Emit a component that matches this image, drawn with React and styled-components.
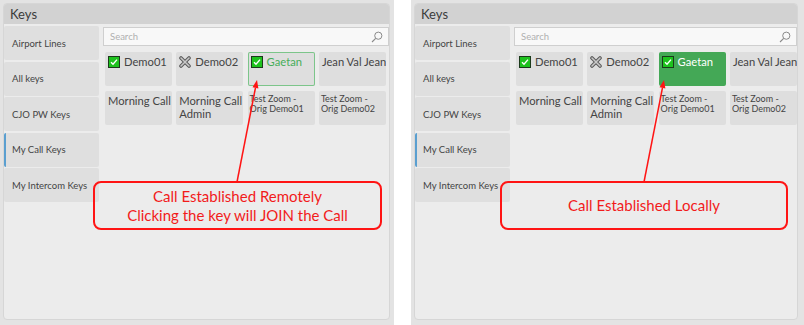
import React from 'react'
import styled, { createGlobalStyle } from 'styled-components'

const GlobalStyle = createGlobalStyle`
    html, body {
        margin: 0;
        padding: 0;
        background: #ffffff;
    }
    body {
        font-family: Lato, "Open Sans", "DejaVu Sans", sans-serif;
        width: 804px;
        height: 325px;
        overflow: hidden;
    }
`

const Page = styled.div`
    display: flex;
    gap: 17px;
    width: 804px;
    height: 325px;
`

const Shot = styled.div`
    position: relative;
    width: ${p => p.w}px;
    height: 325px;
    background: #e3e3e3;
    padding: 3px ${p => p.pr}px 3px 3px;
    box-sizing: border-box;
`

const Panel = styled.div`
    height: 317px;
    background: #ececec;
    border: 1px solid #d6d6d6;
    border-radius: 4px;
    box-sizing: border-box;
    overflow: hidden;
    display: flex;
    flex-direction: column;
`

const Header = styled.div`
    height: 20px;
    background: #d2d2d2;
    color: #3c3c3c;
    font-size: 13px;
    line-height: 20px;
    padding-left: 6px;
`

const Body = styled.div`
    display: flex;
    gap: 4px;
    padding-top: 2px;
`

const Sidebar = styled.div`
    width: 95px;
    display: flex;
    flex-direction: column;
    gap: 1.5px;
`

const Tab = styled.div`
    height: 34px;
    background: #dfdfdf;
    border-radius: 2px;
    border-left: 2px solid ${p => (p.active ? '#5a9fd0' : 'transparent')};
    color: #444;
    font-size: 9.5px;
    display: flex;
    align-items: center;
    padding-left: 6px;
    white-space: nowrap;
`

const Main = styled.div`
    flex: 1;
    display: flex;
    flex-direction: column;
    gap: 6px;
    padding-top: 1px;
`

const Search = styled.div`
    height: 19px;
    background: #f8f8f8;
    border: 1px solid #cfcfcf;
    box-sizing: border-box;
    display: flex;
    align-items: center;
    justify-content: space-between;
    padding: 0 5px 0 6px;
    color: #b0b0b0;
    font-size: 9.5px;
`

const Grid = styled.div`
    display: grid;
    grid-template-columns: repeat(4, 67px);
    grid-auto-rows: 34px;
    column-gap: 4.3px;
    row-gap: 5px;
    padding-left: 2px;
`

const Key = styled.div`
    box-sizing: border-box;
    border-radius: 2px;
    background: ${p => (p.state === 'local' ? '#44a856' : '#dedede')};
    box-shadow: ${p => (p.state === 'remote' ? 'inset 0 0 0 1px #7cc58a' : 'none')};
    color: ${p => (p.state === 'local' ? '#ffffff' : p.state === 'remote' ? '#46ad59' : '#444')};
    font-size: ${p => (p.small ? '9px' : '11.2px')};
    line-height: ${p => (p.small ? '10px' : '13px')};
    padding: ${p => (p.small ? '3px 2px' : '3px 1px 0 3px')};
    display: flex;
    align-items: flex-start;
    gap: 4px;
    overflow: hidden;
`

const Label = styled.div`
    display: flex;
    flex-direction: column;
    white-space: nowrap;
`

const IconBox = styled.span`
    display: inline-flex;
    flex: none;
    margin-top: 1px;
`

const Callout = styled.div`
    position: absolute;
    left: ${p => p.x}px;
    top: 181px;
    width: ${p => p.w}px;
    height: 49px;
    box-sizing: border-box;
    border: 2px solid #ff1414;
    border-radius: 8px;
    display: flex;
    flex-direction: column;
    align-items: center;
    justify-content: center;
    color: #f21b1b;
    font-size: 15px;
    line-height: 19px;
`

const Arrow = styled.svg`
    position: absolute;
    left: 0;
    top: 0;
    pointer-events: none;
`

const Check = () => (
    <svg width="12" height="12" viewBox="0 0 12 12">
        <rect x="0.5" y="0.5" width="11" height="11" fill="#1ec21e" stroke="#1b3a1b" />
        <path d="M3 6.2 L5 8.2 L9 3.6" fill="none" stroke="#fff" strokeWidth="1.4" />
    </svg>
)

const Cross = () => (
    <svg width="12" height="12" viewBox="0 0 12 12">
        <path d="M2 2 L10 10 M10 2 L2 10" stroke="#5a5a5a" strokeWidth="3.6" strokeLinecap="round" />
        <path d="M2 2 L10 10 M10 2 L2 10" stroke="#c8c8c8" strokeWidth="1.6" strokeLinecap="round" />
    </svg>
)

const Magnifier = () => (
    <svg width="12" height="12" viewBox="0 0 12 12">
        <circle cx="7.3" cy="4.7" r="3.6" fill="none" stroke="#8a8a8a" strokeWidth="1" />
        <path d="M4.7 7.3 L1 11" stroke="#8a8a8a" strokeWidth="1.1" />
    </svg>
)

const tabs = ['Airport Lines', 'All keys', 'CJO PW Keys', 'My Call Keys', 'My Intercom Keys']

const KeysWindow = ({ gaetan }) => {
    const keys = [
        { lines: ['Demo01'], icon: <Check /> },
        { lines: ['Demo02'], icon: <Cross /> },
        { lines: ['Gaetan'], icon: <Check />, state: gaetan },
        { lines: ['Jean Val Jean'] },
        { lines: ['Morning Call'] },
        { lines: ['Morning Call', 'Admin'] },
        { lines: ['Test Zoom -', 'Orig Demo01'], small: true },
        { lines: ['Test Zoom -', 'Orig Demo02'], small: true },
    ]
    return (
        <Panel>
            <Header>Keys</Header>
            <Body>
                <Sidebar>
                    {tabs.map(t => (
                        <Tab key={t} active={t === 'My Call Keys'}>{t}</Tab>
                    ))}
                </Sidebar>
                <Main>
                    <Search>
                        <span>Search</span>
                        <Magnifier />
                    </Search>
                    <Grid>
                        {keys.map(k => (
                            <Key key={k.lines.join(' ')} state={k.state} small={k.small}>
                                {k.icon && <IconBox>{k.icon}</IconBox>}
                                <Label>
                                    {k.lines.map(l => <span key={l}>{l}</span>)}
                                </Label>
                            </Key>
                        ))}
                    </Grid>
                </Main>
            </Body>
        </Panel>
    )
}

const ArrowLine = ({ x1, y1, x2, y2 }) => {
    const dx = x2 - x1
    const dy = y2 - y1
    const len = Math.sqrt(dx * dx + dy * dy)
    const ux = dx / len
    const uy = dy / len
    const bx = x2 - ux * 8
    const by = y2 - uy * 8
    const head = `${x2},${y2} ${bx - uy * 3},${by + ux * 3} ${bx + uy * 3},${by - ux * 3}`
    return (
        <Arrow width="394" height="325">
            <line x1={x1} y1={y1} x2={bx} y2={by} stroke="#ff1414" strokeWidth="1.5" />
            <polygon points={head} fill="#ff1414" />
        </Arrow>
    )
}

const App = () => {
    return (
        <Page>
            <GlobalStyle />
            <Shot w={394} pr={4}>
                <KeysWindow gaetan="remote" />
                <ArrowLine x1={237} y1={182} x2={257} y2={80} />
                <Callout x={93} w={289}>
                    <div>Call Established Remotely</div>
                    <div>Clicking the key will JOIN the Call</div>
                </Callout>
            </Shot>
            <Shot w={393} pr={6}>
                <KeysWindow gaetan="local" />
                <ArrowLine x1={233} y1={182} x2={253} y2={80} />
                <Callout x={89} w={288}>
                    <div>Call Established Locally</div>
                </Callout>
            </Shot>
        </Page>
    )
}

export default App
